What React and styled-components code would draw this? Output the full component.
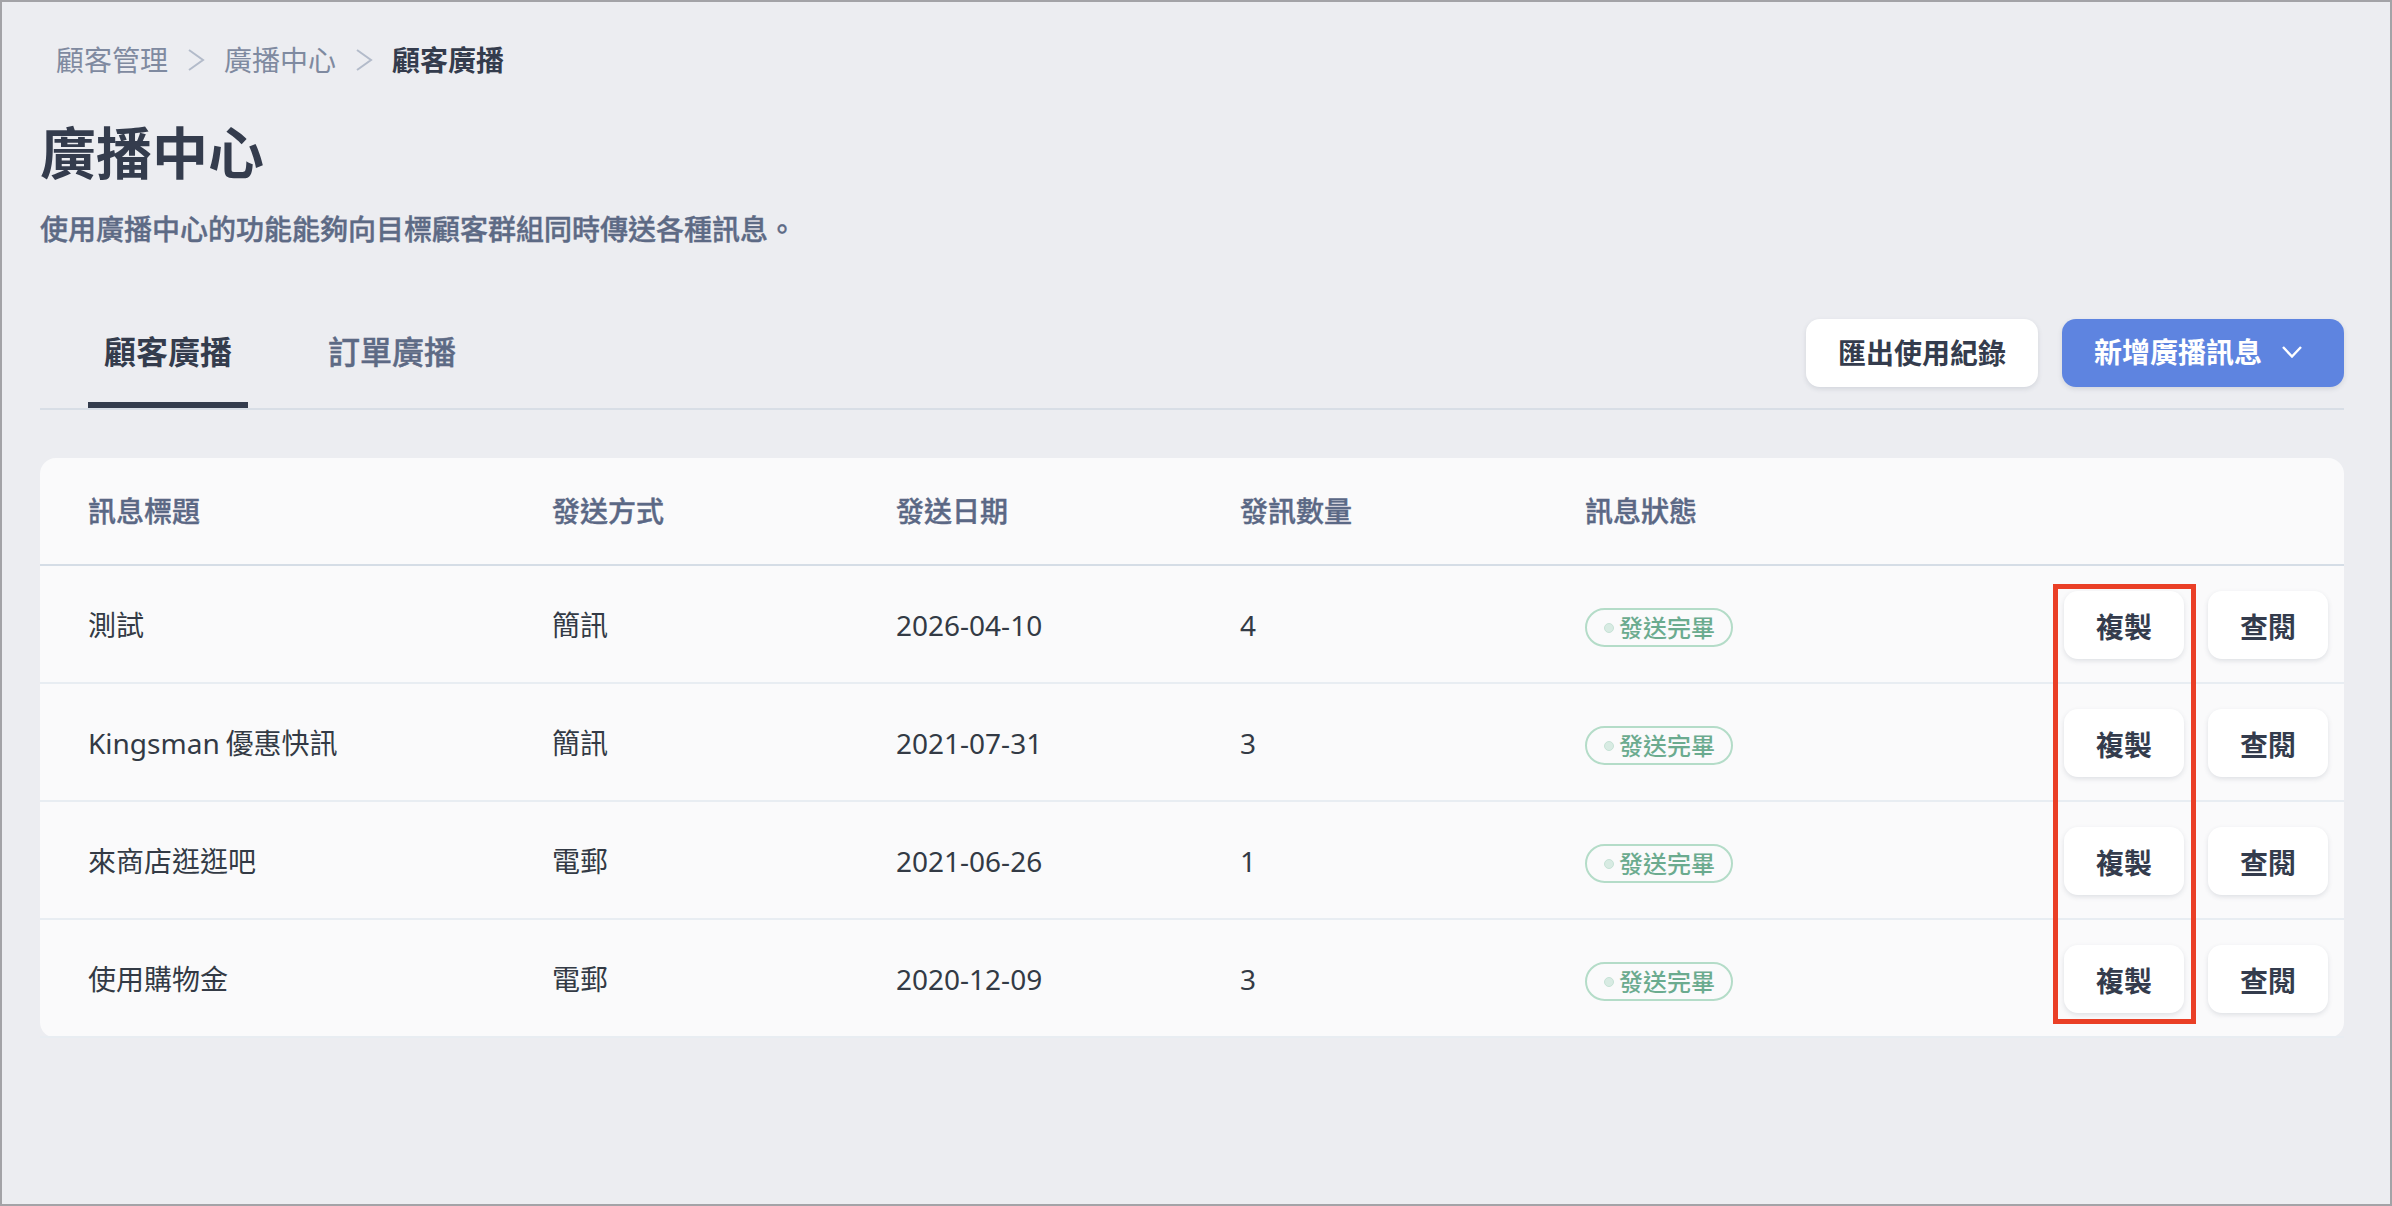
import React from 'react'
import styled, { createGlobalStyle } from 'styled-components'

const GlobalStyle = createGlobalStyle`
  html, body {
    margin: 0;
    padding: 0;
    background: #ecedf1;
    font-family: "Noto Sans", "Noto Sans CJK TC", sans-serif;
  }
`

const Page = styled.div`
  box-sizing: border-box;
  width: 2392px;
  height: 1206px;
  overflow: hidden;
  padding: 38px 46px 0 38px;
  background: #ecedf1;
  border: 2px solid #a3a3a7;
`

const Breadcrumb = styled.nav`
  display: flex;
  align-items: center;
  gap: 16px;
  height: 40px;
  padding-left: 16px;
`

const Crumb = styled.span`
  font-size: 28px;
  line-height: 40px;
  font-weight: ${p => (p.$active ? 700 : 400)};
  color: ${p => (p.$active ? '#343c4d' : '#7f8aa0')};
`

const Title = styled.h1`
  margin: 32px 0 0;
  font-size: 56px;
  line-height: 80px;
  font-weight: 700;
  color: #343c4d;
`

const Subtitle = styled.p`
  margin: 17px 0 0;
  font-size: 28px;
  line-height: 40px;
  font-weight: 500;
  -webkit-text-stroke: 0.4px #5d6a85;
  color: #5d6a85;
`

const TabBar = styled.div`
  display: flex;
  justify-content: space-between;
  align-items: center;
  height: 110px;
  margin-top: 49px;
  border-bottom: 2px solid #d8dee6;
  box-sizing: content-box;
`

const Tabs = styled.div`
  display: flex;
  align-self: stretch;
  gap: 64px;
  padding-left: 48px;
`

const Tab = styled.div`
  display: flex;
  align-items: center;
  padding: 0 16px 2px;
  font-size: 32px;
  line-height: 40px;
  font-weight: ${p => (p.$active ? 700 : 500)};
  color: ${p => (p.$active ? '#343c4d' : '#5d6a85')};
  -webkit-text-stroke: ${p => (p.$active ? '0' : '0.4px #5d6a85')};
  border-bottom: 6px solid ${p => (p.$active ? '#343c4d' : 'transparent')};
  border-top: 6px solid transparent;
`

const Actions = styled.div`
  display: flex;
  gap: 24px;
`

const Button = styled.button`
  display: flex;
  align-items: center;
  justify-content: center;
  box-sizing: border-box;
  height: 68px;
  padding: 0;
  border: 0;
  border-radius: 14px;
  font-family: inherit;
  font-size: 28px;
  line-height: 40px;
  font-weight: 700;
  color: #343c4d;
  background: #fff;
  box-shadow: 0 2px 5px rgba(60, 70, 90, 0.14);
`

const ExportButton = styled(Button)`
  width: 232px;
`

const PrimaryButton = styled(Button)`
  width: 282px;
  justify-content: flex-start;
  gap: 20px;
  padding: 0 0 2px 32px;
  color: #fff;
  background: #5e84e0;
`

const Card = styled.div`
  position: relative;
  margin-top: 48px;
  background: #fafafb;
  border-radius: 16px;
`

const Row = styled.div`
  display: grid;
  grid-template-columns: 464px 344px 344px 345px 1fr auto;
  align-items: center;
  box-sizing: border-box;
  height: ${p => (p.$header ? '108px' : '118px')};
  padding: ${p => (p.$header ? '0' : '2px')} 16px 0 48px;
  border-bottom: 2px solid ${p => (p.$header ? '#d5dde6' : '#e8edf2')};

  &:last-child {
    height: 117px;
    padding-top: 1px;
    border-bottom: 0;
  }
`

const HeaderCell = styled.div`
  font-size: 28px;
  line-height: 40px;
  font-weight: 500;
  -webkit-text-stroke: 0.4px #5b6885;
  color: #5b6885;
`

const Cell = styled.div`
  font-size: 28px;
  line-height: 40px;
  word-spacing: -1.5px;
  color: #333a45;
`

const Badge = styled.span`
  display: flex;
  align-items: center;
  box-sizing: border-box;
  width: 148px;
  height: 39px;
  margin-top: 5px;
  padding-left: 17px;
  gap: 5px;
  border: 2px solid #b4dcc8;
  border-radius: 20px;
  font-size: 24px;
  line-height: 35px;
  font-weight: 500;
  color: #6bab8f;
`

const Dot = styled.i`
  width: 10px;
  height: 10px;
  border-radius: 50%;
  background: #d8ebe3;
  border: 1px solid #c6e2d6;
  box-sizing: border-box;
`

const RowActions = styled.div`
  display: flex;
  gap: 24px;
`

const RowButton = styled(Button)`
  width: 120px;
  padding-top: 4px;
`

const Highlight = styled.div`
  position: absolute;
  top: 126px;
  right: 148px;
  box-sizing: border-box;
  width: 143px;
  height: 440px;
  border: 5px solid #ea3f26;
  pointer-events: none;
`

const Chevron = () => (
  <svg width="24" height="24" viewBox="0 0 24 24" fill="none" stroke="#b3bbca" strokeWidth="2">
    <path d="M5 2l14 10L5 22" />
  </svg>
)

const Caret = () => (
  <svg width="20" height="12" viewBox="0 0 20 12" fill="none" stroke="#fff" strokeWidth="2.4">
    <path d="M1 1l9 9.5L19 1" />
  </svg>
)

const rows = [
  { title: '測試', method: '簡訊', date: '2026-04-10', count: 4 },
  { title: 'Kingsman 優惠快訊', method: '簡訊', date: '2021-07-31', count: 3 },
  { title: '來商店逛逛吧', method: '電郵', date: '2021-06-26', count: 1 },
  { title: '使用購物金', method: '電郵', date: '2020-12-09', count: 3 },
]

export default function App() {
  return (
    <Page>
      <GlobalStyle />
      <Breadcrumb>
        <Crumb>顧客管理</Crumb>
        <Chevron />
        <Crumb>廣播中心</Crumb>
        <Chevron />
        <Crumb $active>顧客廣播</Crumb>
      </Breadcrumb>
      <Title>廣播中心</Title>
      <Subtitle>使用廣播中心的功能能夠向目標顧客群組同時傳送各種訊息。</Subtitle>
      <TabBar>
        <Tabs>
          <Tab $active>顧客廣播</Tab>
          <Tab>訂單廣播</Tab>
        </Tabs>
        <Actions>
          <ExportButton>匯出使用紀錄</ExportButton>
          <PrimaryButton>
            新增廣播訊息
            <Caret />
          </PrimaryButton>
        </Actions>
      </TabBar>
      <Card>
        <Row $header>
          <HeaderCell>訊息標題</HeaderCell>
          <HeaderCell>發送方式</HeaderCell>
          <HeaderCell>發送日期</HeaderCell>
          <HeaderCell>發訊數量</HeaderCell>
          <HeaderCell>訊息狀態</HeaderCell>
        </Row>
        {rows.map(row => (
          <Row key={row.title}>
            <Cell>{row.title}</Cell>
            <Cell>{row.method}</Cell>
            <Cell>{row.date}</Cell>
            <Cell>{row.count}</Cell>
            <Badge>
              <Dot />
              發送完畢
            </Badge>
            <RowActions>
              <RowButton>複製</RowButton>
              <RowButton>查閱</RowButton>
            </RowActions>
          </Row>
        ))}
        <Highlight />
      </Card>
    </Page>
  )
}
